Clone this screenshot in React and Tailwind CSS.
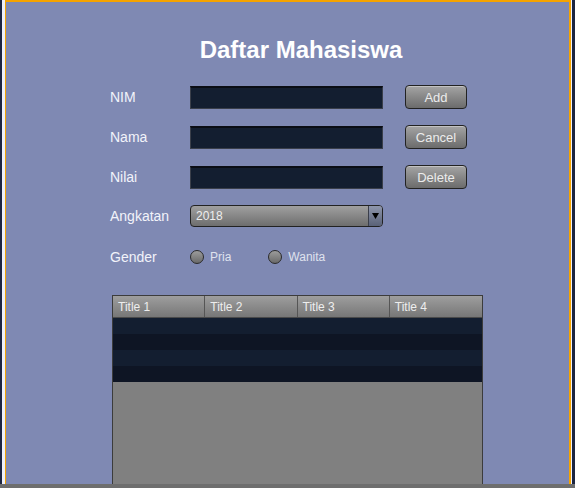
import React from "react"

const font = { fontFamily: '"Liberation Sans", Arial, sans-serif' }

function Field() {
  return <div className="h-[23px] w-[193px] border border-[#3a3f4a] border-t-[#0a0d14] border-t-2 bg-[#131e30]" />
}

function Btn({ children }) {
  return (
    <button className="ml-[22px] flex h-[24px] w-[62px] items-center justify-center rounded-[4px] border border-[#222] bg-gradient-to-b from-[#a4a4a4] to-[#6c6c6c] pt-[1px] text-[13px] text-[#ececec] shadow-[inset_0_1px_0_rgba(255,255,255,0.35)]">
      {children}
    </button>
  )
}

function Label({ children }) {
  return <div className="w-[80px] text-[14px] text-[#f2f3fa]">{children}</div>
}

function Radio({ label }) {
  return (
    <div className="flex items-center gap-[6px]">
      <div className="h-[14px] w-[14px] rounded-full border border-[#2a2a2a] bg-gradient-to-b from-[#9c9c9c] to-[#6a6a6a]" />
      <span className="text-[12px] text-[#dfe2ee]">{label}</span>
    </div>
  )
}

export default function App() {
  const titles = ["Title 1", "Title 2", "Title 3", "Title 4"]
  return (
    <div className="flex h-[488px] w-[575px] flex-col overflow-hidden" style={font}>
      <div className="flex min-h-0 flex-1">
        <div className="w-[2px] bg-[#1b2440]" />
        <div className="w-[3px] bg-[#eef0f8]" />
        <div className="flex min-h-0 flex-1 flex-col border-l border-r-2 border-t-2 border-[#f5a300] bg-[#7f89b3] pl-[104px]">
          <h1 className="mt-[35px] h-[26px] w-[382px] text-center text-[24px] font-bold leading-[26px] text-white">
            Daftar Mahasiswa
          </h1>

          <div className="mt-[22px] flex flex-col gap-[16px]">
            {[
              ["NIM", "Add"],
              ["Nama", "Cancel"],
              ["Nilai", "Delete"],
            ].map(([l, b]) => (
              <div key={l} className="flex h-[24px] items-center">
                <Label>{l}</Label>
                <Field />
                <Btn>{b}</Btn>
              </div>
            ))}
          </div>

          <div className="mt-[16px] flex h-[22px] items-center">
            <Label>Angkatan</Label>
            <div className="flex h-[22px] w-[193px] items-stretch overflow-hidden rounded-[4px] border border-[#222] bg-gradient-to-b from-[#a0a0a0] to-[#6e6e6e]">
              <span className="flex-1 pl-[5px] text-[12px] leading-[20px] text-[#eeeeee]">2018</span>
              <div className="flex w-[14px] items-center justify-center border-l border-[#3a3e4a] bg-gradient-to-b from-[#8e96ac] to-[#5a6278]">
                <svg width="7" height="6" viewBox="0 0 7 6">
                  <path d="M0 0h7L3.5 6z" fill="#000" />
                </svg>
              </div>
            </div>
          </div>

          <div className="mt-[20px] flex h-[20px] items-center">
            <Label>Gender</Label>
            <div className="flex gap-[37px]">
              <Radio label="Pria" />
              <Radio label="Wanita" />
            </div>
          </div>

          <div className="mt-[28px] ml-[2px] flex min-h-0 w-[371px] flex-1 flex-col border border-b-0 border-[#3c3c3c] bg-[#808080]">
            <div className="grid h-[22px] grid-cols-4 border-b border-[#4a4a4a] bg-gradient-to-b from-[#9e9e9e] to-[#777]">
              {titles.map((t, i) => (
                <div
                  key={t}
                  className={`flex items-center pl-[5px] text-[12px] text-[#eeeeee] ${i < 3 ? "border-r border-[#555]" : ""}`}
                >
                  {t}
                </div>
              ))}
            </div>
            {[0, 1, 2, 3].map((r) => (
              <div key={r} className={`h-[16px] ${r % 2 === 0 ? "bg-[#131e30]" : "bg-[#0e1524]"}`} />
            ))}
          </div>
        </div>
        <div className="w-[1px] bg-[#eef0f8]" />
        <div className="w-[3px] bg-[#1b2440]" />
      </div>
      <div className="h-[4px] bg-[#6e6e6e]" />
    </div>
  )
}
